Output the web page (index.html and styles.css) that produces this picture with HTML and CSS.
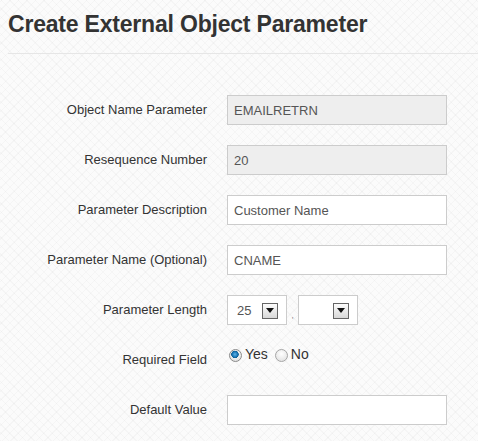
FILE: index.html
```html
<!DOCTYPE html>
<html lang="en">
<head>
<meta charset="utf-8">
<title>Create External Object Parameter</title>
<link rel="stylesheet" href="styles.css">
</head>
<body>
<div class="page">
  <h1 class="title">Create External Object Parameter</h1>
  <div class="divider"></div>
  <form class="form">
    <div class="row">
      <label class="label">Object Name Parameter</label>
      <input class="field" type="text" value="EMAILRETRN" disabled>
    </div>
    <div class="row">
      <label class="label">Resequence Number</label>
      <input class="field" type="text" value="20" disabled>
    </div>
    <div class="row">
      <label class="label">Parameter Description</label>
      <input class="field" type="text" value="Customer Name">
    </div>
    <div class="row">
      <label class="label">Parameter Name (Optional)</label>
      <input class="field" type="text" value="CNAME">
    </div>
    <div class="row">
      <label class="label">Parameter Length</label>
      <div class="length">
        <div class="select">
          <span class="select-value">25</span>
          <span class="select-btn"><svg width="8" height="5" viewBox="0 0 8 5"><path d="M0 0H8L4 5Z" fill="#111"/></svg></span>
        </div>
        <span class="comma">,</span>
        <div class="select">
          <span class="select-value"></span>
          <span class="select-btn"><svg width="8" height="5" viewBox="0 0 8 5"><path d="M0 0H8L4 5Z" fill="#111"/></svg></span>
        </div>
      </div>
    </div>
    <div class="row">
      <label class="label">Required Field</label>
      <div class="radios">
        <span class="radio radio-on"></span><span class="radio-text">Yes</span>
        <span class="radio"></span><span class="radio-text">No</span>
      </div>
    </div>
    <div class="row">
      <label class="label">Default Value</label>
      <input class="field" type="text" value="">
    </div>
  </form>
</div>
</body>
</html>
```

FILE: styles.css
```css
html, body {
  margin: 0;
  padding: 0;
}
body {
  font-family: "Liberation Sans", Arial, sans-serif;
  color: #333;
  background-color: #fbfbfb;
  background-image:
    repeating-linear-gradient(45deg, rgba(0,0,0,0.025) 0 1px, transparent 1px 6px),
    repeating-linear-gradient(-45deg, rgba(0,0,0,0.025) 0 1px, transparent 1px 6px);
  height: 441px;
  overflow: hidden;
}
.page {
  padding-left: 8px;
}
.title {
  margin: 0;
  padding-top: 11px;
  font-size: 23px;
  letter-spacing: -0.2px;
  line-height: 26px;
  font-weight: bold;
  color: #333;
}
.divider {
  margin-top: 16px;
  border-top: 1px solid #e6e6e6;
}
.form {
  display: flex;
  flex-direction: column;
  gap: 20px;
  margin-top: 41px;
}
.row {
  display: grid;
  grid-template-columns: 199px 220px;
  column-gap: 20px;
  align-items: center;
  height: 30px;
}
.label {
  text-align: right;
  font-size: 13px;
  color: #333;
  margin-top: -1px;
}
.field {
  box-sizing: border-box;
  width: 220px;
  height: 30px;
  margin: 0;
  padding: 0 6px;
  border: 1px solid #ccc;
  background: #fff;
  font-family: "Liberation Sans", Arial, sans-serif;
  font-size: 13px;
  color: #555;
  outline: none;
}
.field:disabled {
  background: #eee;
  color: #555;
  -webkit-text-fill-color: #555;
  opacity: 1;
}
.length {
  display: flex;
  align-items: center;
  height: 30px;
}
.select {
  box-sizing: border-box;
  width: 60px;
  height: 30px;
  border: 1px solid #ccc;
  background: #fff;
  display: flex;
  align-items: center;
  padding: 0 8px 0 9px;
}
.select-value {
  flex: 1;
  font-size: 13px;
  color: #555;
}
.select-btn {
  box-sizing: border-box;
  width: 16px;
  height: 16px;
  border: 1px solid #666;
  background: linear-gradient(#fdfdfd, #d8d8d8);
  display: flex;
  align-items: center;
  justify-content: center;
  margin-top: 1px;
}
.comma {
  width: 11px;
  text-align: center;
  font-size: 8px;
  color: #666;
  padding-top: 10px;
}
.radios {
  align-self: start;
  display: flex;
  align-items: center;
  padding-top: 4px;
  padding-left: 2px;
  font-size: 14px;
  color: #333;
}
.radio {
  box-sizing: border-box;
  width: 13px;
  height: 13px;
  border-radius: 50%;
  border: 1px solid #a5a5a5;
  background: radial-gradient(circle at 50% 35%, #fff, #dcdcdc);
}
.radio-on {
  border-color: #8a8a8a;
  background:
    radial-gradient(circle at 45% 40%, #5fb3e8 0, #1a78b8 2.5px, #0d5c92 3.5px, transparent 4px),
    radial-gradient(circle at 50% 35%, #fff, #dadada);
}
.radio-text {
  margin-left: 3px;
  margin-right: 7px;
  line-height: 13px;
  margin-top: -3px;
}
```
